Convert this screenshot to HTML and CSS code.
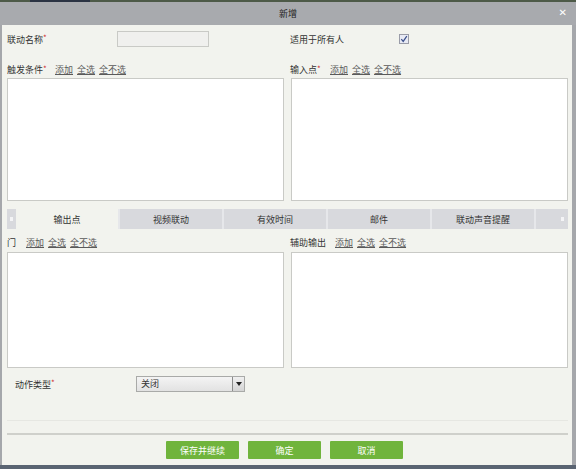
FILE: index.html
```html
<!DOCTYPE html>
<html lang="zh">
<head>
<meta charset="utf-8">
<title>新增</title>
<link rel="stylesheet" href="styles.css">
</head>
<body>
<div class="dialog">
  <div class="topstrip"></div>
  <div class="titlebar">
    <span class="title">新增</span>
    <span class="close">&#x2715;</span>
  </div>
  <div class="main">
    <div class="grid row1">
      <div class="field">
        <span class="label">联动名称<i class="req">*</i></span>
        <span class="input"></span>
      </div>
      <div class="field">
        <span class="label rlabel">适用于所有人</span>
        <span class="check"><svg viewBox="0 0 10 10" width="10" height="10"><path d="M2.3 5.2 L4.2 7.4 L7.8 2.2" fill="none" stroke="#3a4f8a" stroke-width="1.2"/></svg></span>
      </div>
    </div>
    <div class="grid row2">
      <div class="head"><span class="hlabel">触发条件<i class="req">*</i></span><span class="links"><a>添加</a><a>全选</a><a>全不选</a></span></div>
      <div class="head"><span class="hlabel">输入点<i class="req">*</i></span><span class="links"><a>添加</a><a>全选</a><a>全不选</a></span></div>
    </div>
    <div class="grid lists1">
      <div class="listbox"></div>
      <div class="listbox"></div>
    </div>
    <div class="tabbar">
      <span class="arrow left"></span>
      <span class="tab active">输出点</span>
      <span class="tab">视频联动</span>
      <span class="tab">有效时间</span>
      <span class="tab">邮件</span>
      <span class="tab">联动声音提醒</span>
      <span class="arrow right"></span>
    </div>
    <div class="panel">
      <div class="grid row3">
        <div class="head"><span class="hlabel">门</span><span class="links"><a>添加</a><a>全选</a><a>全不选</a></span></div>
        <div class="head"><span class="hlabel">辅助输出</span><span class="links"><a>添加</a><a>全选</a><a>全不选</a></span></div>
      </div>
      <div class="grid lists2">
        <div class="listbox"></div>
        <div class="listbox"></div>
      </div>
      <div class="action">
        <span class="alabel">动作类型<i class="req">*</i></span>
        <span class="select"><span class="sval">关闭</span><span class="sbtn"></span></span>
      </div>
    </div>
    <div class="sep"></div>
    <div class="buttons">
      <span class="btn">保存并继续</span>
      <span class="btn">确定</span>
      <span class="btn">取消</span>
    </div>
  </div>
  <div class="bottomstrip"></div>
</div>
</body>
</html>
```
FILE: styles.css
```css
* { box-sizing: border-box; }
html, body { margin: 0; padding: 0; }
body {
  width: 576px;
  height: 469px;
  overflow: hidden;
  font-family: "Noto Sans CJK SC", "DejaVu Sans", sans-serif;
  font-size: 9px;
  color: #333;
}
.dialog {
  width: 576px;
  height: 469px;
  display: flex;
  flex-direction: column;
}
.topstrip {
  height: 2px;
  background: linear-gradient(to right, #4d5a48 0, #4d5a48 30px, #2b3343 30px, #2b3343 90px, #4d5a48 90px);
}
.titlebar {
  height: 23px;
  background: #a8aaae;
  display: flex;
  align-items: center;
  justify-content: center;
  position: relative;
}
.title {
  font-size: 9px;
  color: #222;
}
.close {
  position: absolute;
  right: 9px;
  top: 5px;
  color: #fff;
  font-size: 10px;
  font-weight: bold;
  font-family: "DejaVu Sans", sans-serif;
}
.main {
  flex: 1;
  background: #f2f3ee;
  border-left: 2px solid #a5a7ab;
  border-right: 4px solid #a5a7ab;
  padding: 0 4px 0 5px;
  display: flex;
  flex-direction: column;
}
.grid {
  display: grid;
  grid-template-columns: 277px 277px;
  column-gap: 7px;
}
.row1 { margin-top: 6px; height: 16px; }
.field {
  display: flex;
  align-items: center;
  height: 16px;
}
.label {
  width: 110px;
  flex: none;
}
.rlabel { margin-left: -1px; }
.req {
  color: #d03030;
  font-style: normal;
  font-size: 8px;
  vertical-align: top;
  position: relative;
  top: -1px;
}
.input {
  width: 92px;
  height: 16px;
  background: #f0f0ee;
  border: 1px solid #c9cac6;
}
.check {
  width: 10px;
  height: 10px;
  margin-left: -1px;
  border: 1px solid #9a9ca8;
  background: #e8eaf4;
  display: flex;
  align-items: center;
  justify-content: center;
}
.check svg { display: block; flex: none; }
.row2 { margin-top: 16px; height: 14px; }
.head {
  display: flex;
  align-items: center;
  height: 14px;
  line-height: 14px;
}
.hlabel { margin-right: 8px; }
.row2 .hlabel { width: 48px; margin-right: 0; }
.row2 .head:last-child .hlabel { width: 40px; margin-left: -1px; }
.row3 .head:last-child .hlabel { width: 45px; margin-right: 0; margin-left: -1px; }
.row3 .head:first-child .hlabel { width: 19px; margin-right: 0; }
.links a {
  color: #5a5a5a;
  text-decoration: underline;
  margin-right: 4px;
}
.listbox {
  background: #fff;
  border: 1px solid #c9cac6;
}
.lists1 { margin-top: 1px; height: 123px; }
.tabbar {
  margin-top: 8px;
  height: 20px;
  background: #d8d9dd;
  display: flex;
  align-items: stretch;
}
.arrow {
  position: relative;
  flex: none;
}
.arrow.left { width: 9px; }
.arrow.right { flex: 1; }
.arrow::after {
  content: "";
  position: absolute;
  top: 8px;
  width: 3px;
  height: 4px;
  background: #f4f4f6;
}
.arrow.left::after { left: 3px; }
.arrow.right::after { right: 4px; }
.tab {
  width: 104px;
  flex: none;
  border-right: 2px solid #e6e7ea;
  display: flex;
  align-items: center;
  justify-content: center;
  color: #333;
}
.tab.active { background: #f2f3ee; }
.panel {
  height: 192px;
  border-bottom: 1px solid #e6e7e2;
  display: flex;
  flex-direction: column;
}
.row3 { margin-top: 7px; height: 14px; }
.lists2 { margin-top: 2px; height: 116px; }
.action {
  margin-top: 8px;
  height: 16px;
  display: flex;
  align-items: center;
  padding-left: 8px;
}
.alabel { width: 121px; flex: none; }
.select {
  width: 109px;
  height: 16px;
  border: 1px solid #a9aaa8;
  background: linear-gradient(#f4f4f4, #e2e2e2);
  display: flex;
  align-items: stretch;
}
.sval {
  flex: 1;
  padding-left: 4px;
  line-height: 14px;
}
.sbtn {
  width: 12px;
  border-left: 1px solid #8a8b8a;
  background: linear-gradient(#f0f0f0, #d4d4d4);
  position: relative;
}
.sbtn::after {
  content: "";
  position: absolute;
  left: 3px;
  top: 5px;
  border-left: 3px solid transparent;
  border-right: 3px solid transparent;
  border-top: 4px solid #222;
}
.sep {
  margin-top: 12px;
  height: 2px;
  background: #cfd0cb;
}
.buttons {
  margin-top: 6px;
  height: 18px;
  display: flex;
  justify-content: center;
  gap: 9px;
  padding-right: 6px;
}
.btn {
  width: 73px;
  height: 18px;
  background: #70b43c;
  color: #fff;
  display: flex;
  align-items: center;
  justify-content: center;
  border-radius: 1px;
}
.bottomstrip {
  height: 4px;
  background: #5a6472;
}
```
